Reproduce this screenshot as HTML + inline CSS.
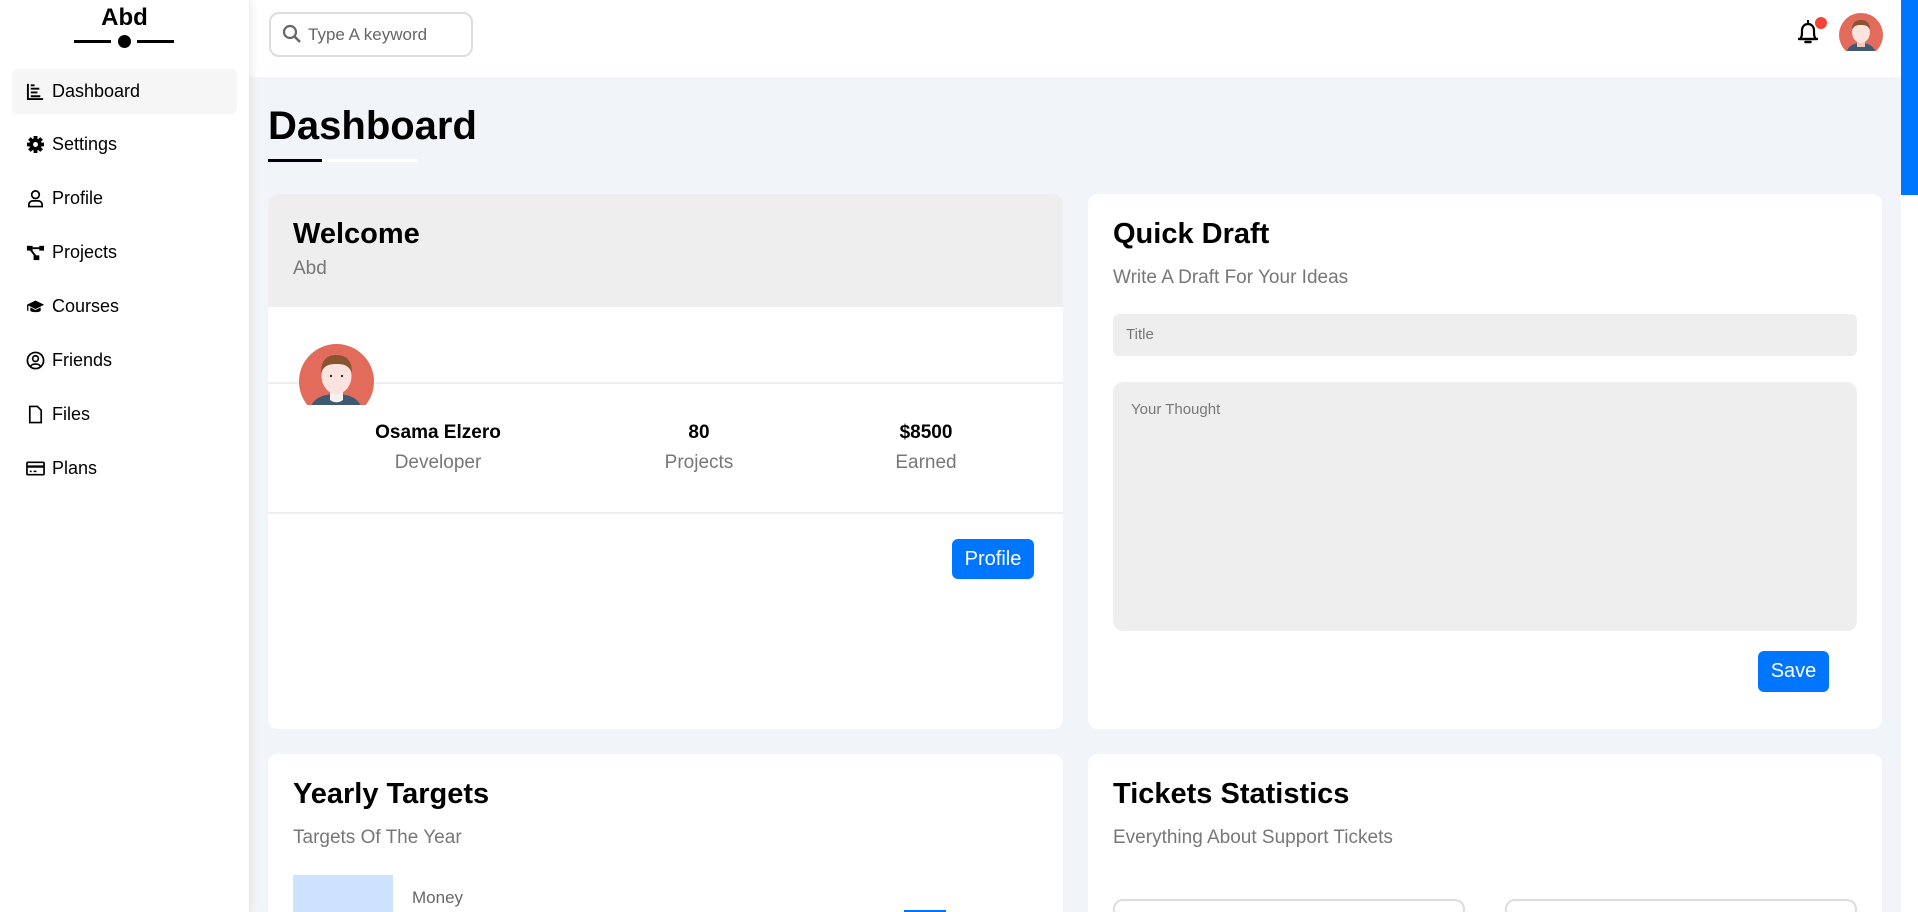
<!DOCTYPE html>
<html><head><meta charset="utf-8"><style>
*{box-sizing:border-box;margin:0;padding:0}
html,body{width:1918px;height:912px;overflow:hidden}
body{background:#f1f5f9;font-family:"Liberation Sans",Arial,sans-serif;position:relative}
#wrap{position:absolute;left:0;top:0;width:1918px;height:912px;overflow:hidden}
.abs{position:absolute}
.side{left:0;top:0;width:249px;height:912px;background:#fff;box-shadow:0 0 10px #ddd;z-index:2}
.nav{position:absolute;left:12px;width:225px;height:45px;border-radius:6px;font-size:18px;color:#000;display:flex;align-items:center;padding-left:14px}
.nav svg{width:19px;height:19px;margin-right:7px}
.head{left:249px;top:0;width:1652px;height:77px;background:#fff}
.card{position:absolute;background:#fff;border-radius:10px;overflow:hidden}
h2{font-size:29px;font-weight:bold;color:#000}
.sub{font-size:19px;color:#777}
.btn{position:absolute;background:#0075ff;color:#fff;border-radius:6px;font-size:20px;display:flex;align-items:center;justify-content:center}
.stat{position:absolute;text-align:center;width:200px}
.stat b{display:block;font-size:19px;color:#000}
.stat span{display:block;font-size:19px;color:#777;margin-top:8px}
</style></head><body><div id="wrap">
<div class="abs side">
  <div class="abs" style="left:0;width:249px;top:4px;text-align:center;font-size:24px;font-weight:bold">Abd</div>
  <div class="abs" style="left:74px;top:40px;width:37px;height:3px;background:#000"></div>
  <div class="abs" style="left:118px;top:35px;width:13px;height:13px;border-radius:50%;background:#000"></div>
  <div class="abs" style="left:137px;top:40px;width:37px;height:3px;background:#000"></div>
  <div class="nav" style="top:69px;background:#f6f6f6"><svg viewBox="0 0 20 20"><path d="M2 2v16h16M5 15h10M5 11h7M5 7h9M5 3.5h4" stroke="#000" stroke-width="2" fill="none"/></svg>Dashboard</div>
  <div class="nav" style="top:122px"><svg viewBox="0 0 20 20"><circle cx="10" cy="10" r="6.5" fill="#000"/><g stroke="#000" stroke-width="4"><path d="M10 1v18M1 10h18M3.6 3.6l12.8 12.8M16.4 3.6L3.6 16.4"/></g><circle cx="10" cy="10" r="2.6" fill="#fff"/></svg>Settings</div>
  <div class="nav" style="top:176px"><svg viewBox="0 0 20 20"><circle cx="10" cy="6" r="4" stroke="#000" stroke-width="1.8" fill="none"/><path d="M3 18.5v-2a4 4 0 0 1 4-4h6a4 4 0 0 1 4 4v2z" stroke="#000" stroke-width="1.8" fill="none"/></svg>Profile</div>
  <div class="nav" style="top:230px"><svg viewBox="0 0 20 20"><rect x="1" y="3" width="6" height="5" fill="#000"/><rect x="14" y="3" width="5" height="5" fill="#000"/><rect x="8" y="13" width="6" height="5" fill="#000"/><path d="M4 6l7 9M7 5.5h8" stroke="#000" stroke-width="2"/></svg>Projects</div>
  <div class="nav" style="top:284px"><svg viewBox="0 0 22 20"><path d="M11 3L1 8l10 5 10-5z" fill="#000"/><path d="M5 11v4c2 2 10 2 12 0v-4l-6 3z" fill="#000"/><path d="M2 8v7" stroke="#000" stroke-width="1.5"/></svg>Courses</div>
  <div class="nav" style="top:338px"><svg viewBox="0 0 20 20"><circle cx="10" cy="10" r="8.5" stroke="#000" stroke-width="1.8" fill="none"/><circle cx="10" cy="8" r="3" stroke="#000" stroke-width="1.8" fill="none"/><path d="M5 16c1.5-3 8.5-3 10 0" stroke="#000" stroke-width="1.8" fill="none"/></svg>Friends</div>
  <div class="nav" style="top:392px"><svg viewBox="0 0 20 20"><path d="M4 1.5h8l4 4v13H4z" stroke="#000" stroke-width="1.8" fill="none"/></svg>Files</div>
  <div class="nav" style="top:446px"><svg viewBox="0 0 20 20"><rect x="1" y="3.5" width="18" height="13" rx="1" stroke="#000" stroke-width="1.8" fill="none"/><path d="M1 8h18" stroke="#000" stroke-width="2.5"/><path d="M4 13h2M8 13h3" stroke="#000" stroke-width="1.5"/></svg>Plans</div>
</div>
<div class="abs head">
  <div class="abs" style="left:20px;top:12px;width:204px;height:45px;border:2px solid #ddd;border-radius:10px"></div>
  <svg class="abs" style="left:33px;top:24px" width="20" height="20" viewBox="0 0 20 20"><circle cx="8" cy="8" r="6" stroke="#666" stroke-width="2.2" fill="none"/><path d="M12.5 12.5l5.5 5.5" stroke="#666" stroke-width="2.5"/></svg>
  <div class="abs" style="left:59px;top:25px;font-size:17px;color:#666">Type A keyword</div>
  <svg class="abs" style="left:1547px;top:18px" width="24" height="28" viewBox="0 0 24 28"><path d="M4 21c2-2 2-4 2-9a6 6 0 0 1 12 0c0 5 0 7 2 9z" stroke="#000" stroke-width="2.2" fill="none" stroke-linejoin="round"/><path d="M2 21h20" stroke="#000" stroke-width="2.2"/><path d="M9.5 24h5" stroke="#000" stroke-width="2.5" stroke-linecap="round"/><path d="M12 2v3" stroke="#000" stroke-width="2"/></svg>
  <div class="abs" style="left:1566px;top:17px;width:12px;height:12px;border-radius:50%;background:#f44336"></div>
  <svg class="abs" style="left:1590px;top:13px" width="44" height="38" viewBox="0 0 44 38"><defs><clipPath id="c1"><rect width="44" height="38"/></clipPath></defs><g clip-path="url(#c1)"><circle cx="22" cy="22" r="22" fill="#e26b5c"/><path d="M8 38c2-6 8-8 14-8s12 2 14 8z" fill="#3e5a73"/><rect x="18" y="26" width="8" height="8" fill="#f2c8bd"/><ellipse cx="22" cy="19" rx="9" ry="11" fill="#fde3dd"/><path d="M13 17c0-8 4-10 9-10s9 2 9 10c-2-4-4-5-9-5s-7 1-9 5z" fill="#8a5431"/></g></svg>
</div>
<div class="abs" style="left:1901px;top:0;width:17px;height:912px;background:#fff"></div>
<div class="abs" style="left:1901px;top:0;width:17px;height:195px;background:#0075ff"></div>

<div class="abs" style="left:268px;top:104px;font-size:40px;font-weight:bold">Dashboard</div>
<div class="abs" style="left:268px;top:159px;width:150px;height:3px;background:#fff"></div>
<div class="abs" style="left:268px;top:159px;width:54px;height:3px;background:#000"></div>

<div class="card" style="left:268px;top:194px;width:795px;height:535px">
  <div style="background:#eee;height:113px;padding:24px 0 0 25px"><h2>Welcome</h2><div class="sub" style="margin-top:7px">Abd</div></div>
  <div class="abs" style="left:0;top:188px;width:795px;height:2px;background:#eee"></div>
  <svg class="abs" style="left:31px;top:150px" width="75" height="61" viewBox="0 0 75 61"><defs><clipPath id="c2"><rect width="75" height="61"/></clipPath></defs><g clip-path="url(#c2)"><circle cx="37.5" cy="37.5" r="37.5" fill="#e26b5c"/><path d="M12 62c4-9 14-12 25-12s21 3 25 12z" fill="#3e5a73"/><path d="M31 48h13v8c-4 3-9 3-13 0z" fill="#f6f0ee"/><ellipse cx="37.5" cy="32" rx="15" ry="18" fill="#fde3dd"/><path d="M22 29c0-14 7-18 15.5-18S53 15 53 29c-3-7-7-9-15.5-9S25 22 22 29z" fill="#8a5431"/><circle cx="32" cy="32" r="1.2" fill="#333"/><circle cx="43" cy="32" r="1.2" fill="#333"/></g></svg>
  <div class="stat" style="left:70px;top:228px"><b>Osama Elzero</b><span>Developer</span></div>
  <div class="stat" style="left:331px;top:228px"><b>80</b><span>Projects</span></div>
  <div class="stat" style="left:558px;top:228px"><b>$8500</b><span>Earned</span></div>
  <div class="abs" style="left:0;top:318px;width:795px;height:2px;background:#eee"></div>
  <div class="btn" style="left:684px;top:345px;width:82px;height:40px">Profile</div>
</div>

<div class="card" style="left:1088px;top:194px;width:794px;height:535px;padding:24px 25px">
  <h2>Quick Draft</h2><div class="sub" style="margin-top:16px">Write A Draft For Your Ideas</div>
  <div class="abs" style="left:25px;top:120px;width:744px;height:42px;background:#eee;border-radius:6px;font-size:15px;color:#777;padding:12px 13px">Title</div>
  <div class="abs" style="left:25px;top:188px;width:744px;height:249px;background:#eee;border-radius:10px;font-size:15px;color:#777;padding:19px 18px">Your Thought</div>
  <div class="btn" style="left:670px;top:457px;width:71px;height:41px">Save</div>
</div>

<div class="card" style="left:268px;top:754px;width:795px;height:158px;border-radius:10px 10px 0 0;padding:24px 25px">
  <h2>Yearly Targets</h2><div class="sub" style="margin-top:16px">Targets Of The Year</div>
  <div class="abs" style="left:25px;top:121px;width:100px;height:37px;background:#cce2ff"></div>
  <div class="abs" style="left:144px;top:134px;font-size:17px;color:#666">Money</div>
  <div class="abs" style="left:636px;top:156px;width:42px;height:2px;background:#0075ff"></div>
</div>

<div class="card" style="left:1088px;top:754px;width:794px;height:158px;border-radius:10px 10px 0 0;padding:24px 25px">
  <h2>Tickets Statistics</h2><div class="sub" style="margin-top:16px">Everything About Support Tickets</div>
  <div class="abs" style="left:25px;top:145px;width:352px;height:13px;border:2px solid #ddd;border-bottom:none;border-radius:10px 10px 0 0"></div>
  <div class="abs" style="left:417px;top:145px;width:352px;height:13px;border:2px solid #ddd;border-bottom:none;border-radius:10px 10px 0 0"></div>
</div>
</div></body></html>
